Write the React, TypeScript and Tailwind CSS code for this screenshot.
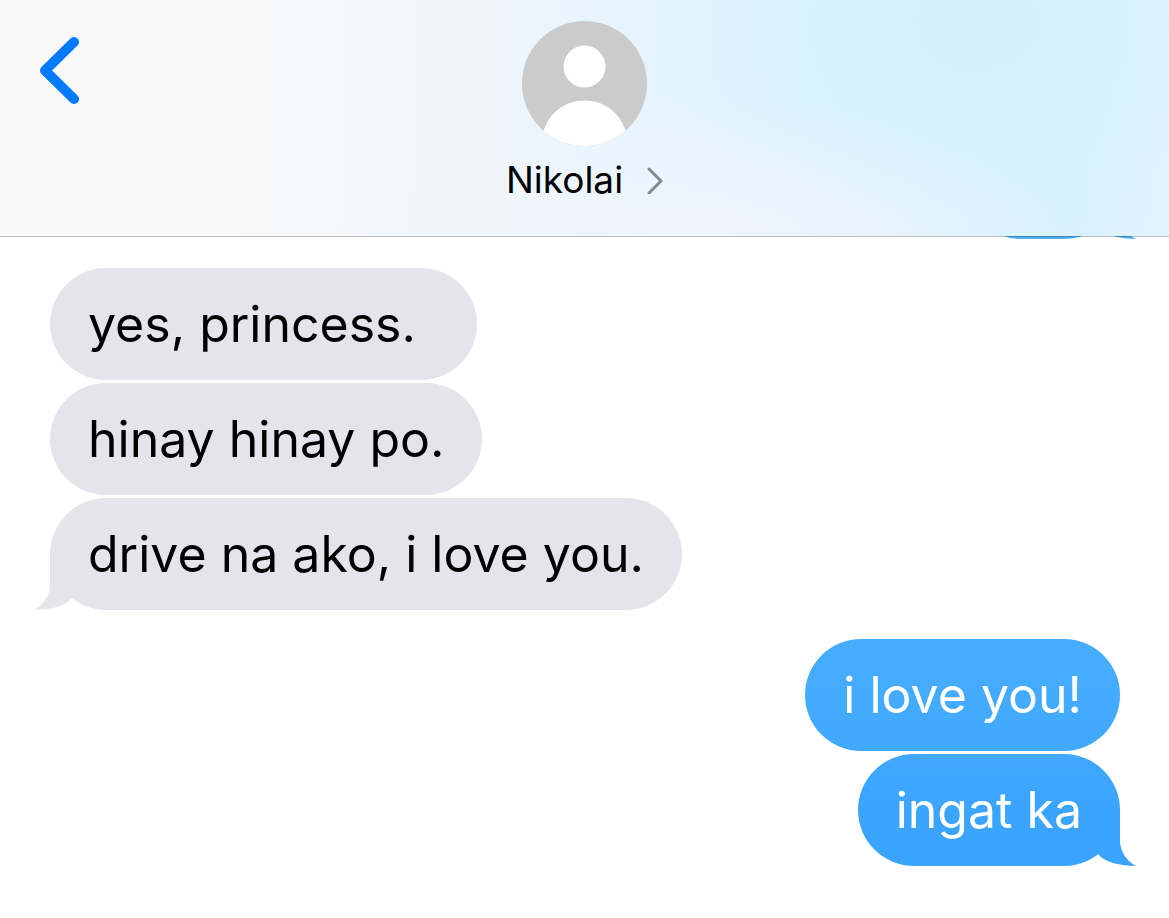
import clsx from "clsx";

type Message = {
  id: number;
  text: string;
  mine: boolean;
  tail?: boolean;
  className?: string;
};

const groups: Message[][] = [
  [
    { id: 1, text: "yes, princess.", mine: false, className: "min-w-[427px]" },
    { id: 2, text: "hinay hinay po.", mine: false },
    { id: 3, text: "drive na ako, i love you.", mine: false, tail: true },
  ],
  [
    { id: 4, text: "i love you!", mine: true, className: "bg-linear-to-b from-[#46acfd] to-[#41a9fe]" },
    { id: 5, text: "ingat ka", mine: true, tail: true, className: "bg-linear-to-b from-[#40a8fe] via-[#3ba4fe] to-[#3ba4fe]" },
  ],
];

function Tail({ mine }: { mine: boolean }) {
  return (
    <svg
      viewBox="0 0 60 60"
      aria-hidden="true"
      className={clsx(
        "absolute bottom-0 size-[60px]",
        mine ? "-right-4" : "-left-4 -scale-x-100"
      )}
    >
      <path d="M44 0V35C44 46 52 56 60 60C44 59.500 29 57 22 48Z" fill="currentColor" />
    </svg>
  );
}

function Bubble({ message }: { message: Message }) {
  const { text, mine, tail, className } = message;
  return (
    <li
      className={clsx(
        "relative max-w-full rounded-[56px] px-[38px] py-6 text-[50px] leading-[64px]",
        mine ? "self-end text-[#3ba4fe]" : "self-start bg-[#e5e4eb] text-[#e5e4eb]",
        className
      )}
    >
      {tail && <Tail mine={mine} />}
      <span className={clsx("relative", mine ? "text-white" : "text-black")}>{text}</span>
    </li>
  );
}

function Avatar() {
  return (
    <svg viewBox="0 0 125 125" className="size-[125px] rounded-full" aria-hidden="true">
      <rect width="125" height="125" fill="#cbcbcb" />
      <circle cx="62.500" cy="45.500" r="21" fill="#fff" />
      <path d="M21 112C26 92 43 79.500 62.500 79.500S99 92 104 112V125H21Z" fill="#fff" />
    </svg>
  );
}

export default function App() {
  return (
    <div className="min-h-screen overflow-hidden bg-white font-['Inter',sans-serif]">
      {/* Header */}
      <header className="relative z-10 grid grid-cols-3 items-start border-b border-black/25 bg-[radial-gradient(ellipse_32%_70%_at_60%_110%,#f3f5fc_0%,#f3f5fc00_100%),radial-gradient(ellipse_26%_100%_at_83%_10%,#d1f1ff_0%,#d1f1ff00_100%),linear-gradient(to_right,#f9f9f9_20%,#f1f6fb_40%,#e5f4fe_54%,#dcf2fe_72%,#d9f1fe_92%,#e1f4fe_100%)] bg-clip-padding pt-[21px] pb-8">
        <button type="button" aria-label="Back" className="mt-[11px] ml-8 w-14 justify-self-start">
          <svg viewBox="0 0 56 76" className="h-[76px] w-14" fill="none" stroke="#007aff" strokeWidth="10" strokeLinecap="round" strokeLinejoin="round">
            <path d="M42 10L13 38.500L42 67" />
          </svg>
        </button>

        <button type="button" className="flex flex-col items-center justify-self-center">
          <Avatar />
          <span className="mt-[10px] flex items-center gap-6 text-[37px] leading-[48px] text-black">
            Nikolai
            <svg viewBox="0 0 16 28" className="h-7 w-4" fill="none" stroke="#84898f" strokeWidth="3" strokeLinecap="round" strokeLinejoin="round" aria-hidden="true">
              <path d="M2 3L14 15L2 27" />
            </svg>
          </span>
        </button>
      </header>

      {/* Conversation, scrolled up under the header */}
      <main className="-mt-[110px] flex flex-col gap-[29px] pr-[49px] pb-12 pl-[50px]">
        <div className="relative h-28 w-[155px] self-end rounded-[56px] bg-[#52b1f9] text-[#52b1f9]" aria-hidden="true">
          <Tail mine />
        </div>
        {groups.map((group) => (
          <ul key={group[0].id} className="flex flex-col gap-[3px]">
            {group.map((message) => (
              <Bubble key={message.id} message={message} />
            ))}
          </ul>
        ))}
      </main>
    </div>
  );
}
